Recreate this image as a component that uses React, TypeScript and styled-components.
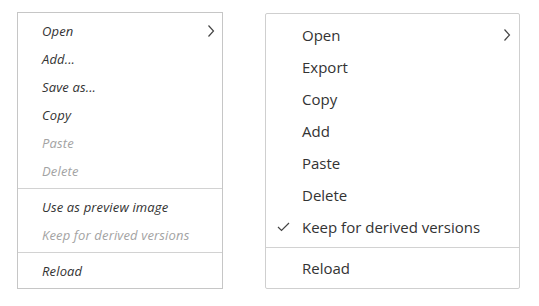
import styled, { createGlobalStyle } from "styled-components";

const GlobalStyle = createGlobalStyle`
  html, body {
    margin: 0;
    padding: 0;
    background: #ffffff;
  }
  body {
    font-family: "Open Sans", "Liberation Sans", sans-serif;
  }
`;

const Page = styled.div`
  display: flex;
  align-items: flex-start;
  gap: 42px;
  padding: 12px 0 0 17px;
`;

const Menu = styled.ul<{ $compact?: boolean }>`
  list-style: none;
  margin: ${(p) => (p.$compact ? "0" : "1px 0 0 0")};
  padding: 0;
  width: ${(p) => (p.$compact ? "204px" : "253px")};
  border: 1px solid ${(p) => (p.$compact ? "#c6c6c6" : "#cfcfcf")};
  border-radius: ${(p) => (p.$compact ? "0" : "2px")};
  background: #fff;
`;

const Section = styled.li<{ $compact?: boolean }>`
  display: flex;
  flex-direction: column;
  padding: ${(p) => (p.$compact ? "4px 0 3px" : "5px 0 4px")};
  & + & {
    border-top: 1px solid ${(p) => (p.$compact ? "#c6c6c6" : "#d2d2d2")};
    padding-top: ${(p) => (p.$compact ? "5px" : "4px")};
  }
  &:last-child {
    padding-top: 4px;
  }
`;

const Item = styled.div<{ $compact?: boolean; $disabled?: boolean }>`
  position: relative;
  display: flex;
  align-items: center;
  height: ${(p) => (p.$compact ? "28px" : "32px")};
  padding-left: ${(p) => (p.$compact ? "24px" : "36px")};
  font-size: ${(p) => (p.$compact ? "13px" : "15px")};
  font-style: ${(p) => (p.$compact ? "italic" : "normal")};
  letter-spacing: ${(p) => (p.$compact ? "0.15px" : "0")};
  color: ${(p) => (p.$disabled ? "#a3a3a3" : "#333333")};
`;

const Chevron = styled.svg<{ $compact?: boolean }>`
  position: absolute;
  right: ${(p) => (p.$compact ? "7px" : "8px")};
  top: 50%;
  transform: translateY(-50%);
`;

const Check = styled.svg`
  position: absolute;
  left: 11px;
  top: 50%;
  transform: translateY(-50%);
`;

type Entry = { label: string; disabled?: boolean; submenu?: boolean; checked?: boolean };

const leftMenu: Entry[][] = [
  [
    { label: "Open", submenu: true },
    { label: "Add..." },
    { label: "Save as..." },
    { label: "Copy" },
    { label: "Paste", disabled: true },
    { label: "Delete", disabled: true },
  ],
  [{ label: "Use as preview image" }, { label: "Keep for derived versions", disabled: true }],
  [{ label: "Reload" }],
];

const rightMenu: Entry[][] = [
  [
    { label: "Open", submenu: true },
    { label: "Export" },
    { label: "Copy" },
    { label: "Add" },
    { label: "Paste" },
    { label: "Delete" },
    { label: "Keep for derived versions", checked: true },
  ],
  [{ label: "Reload" }],
];

function ContextMenu({ sections, compact }: { sections: Entry[][]; compact?: boolean }) {
  return (
    <Menu $compact={compact}>
      {sections.map((items, i) => (
        <Section key={i} $compact={compact}>
          {items.map((it) => (
            <Item key={it.label} $compact={compact} $disabled={it.disabled}>
              {it.checked && (
                <Check width="13" height="10" viewBox="0 0 13 10">
                  <polyline points="1,5 4.5,8.5 12,1" fill="none" stroke="#444" strokeWidth="1.2" />
                </Check>
              )}
              {it.label}
              {it.submenu && (
                <Chevron $compact={compact} width="8" height="12" viewBox="0 0 8 12">
                  <polyline points="1.5,0.5 6.5,6 1.5,11.5" fill="none" stroke="#444" strokeWidth="1.2" />
                </Chevron>
              )}
            </Item>
          ))}
        </Section>
      ))}
    </Menu>
  );
}

export default function App() {
  return (
    <>
      <GlobalStyle />
      <Page>
        <ContextMenu sections={leftMenu} compact />
        <ContextMenu sections={rightMenu} />
      </Page>
    </>
  );
}
